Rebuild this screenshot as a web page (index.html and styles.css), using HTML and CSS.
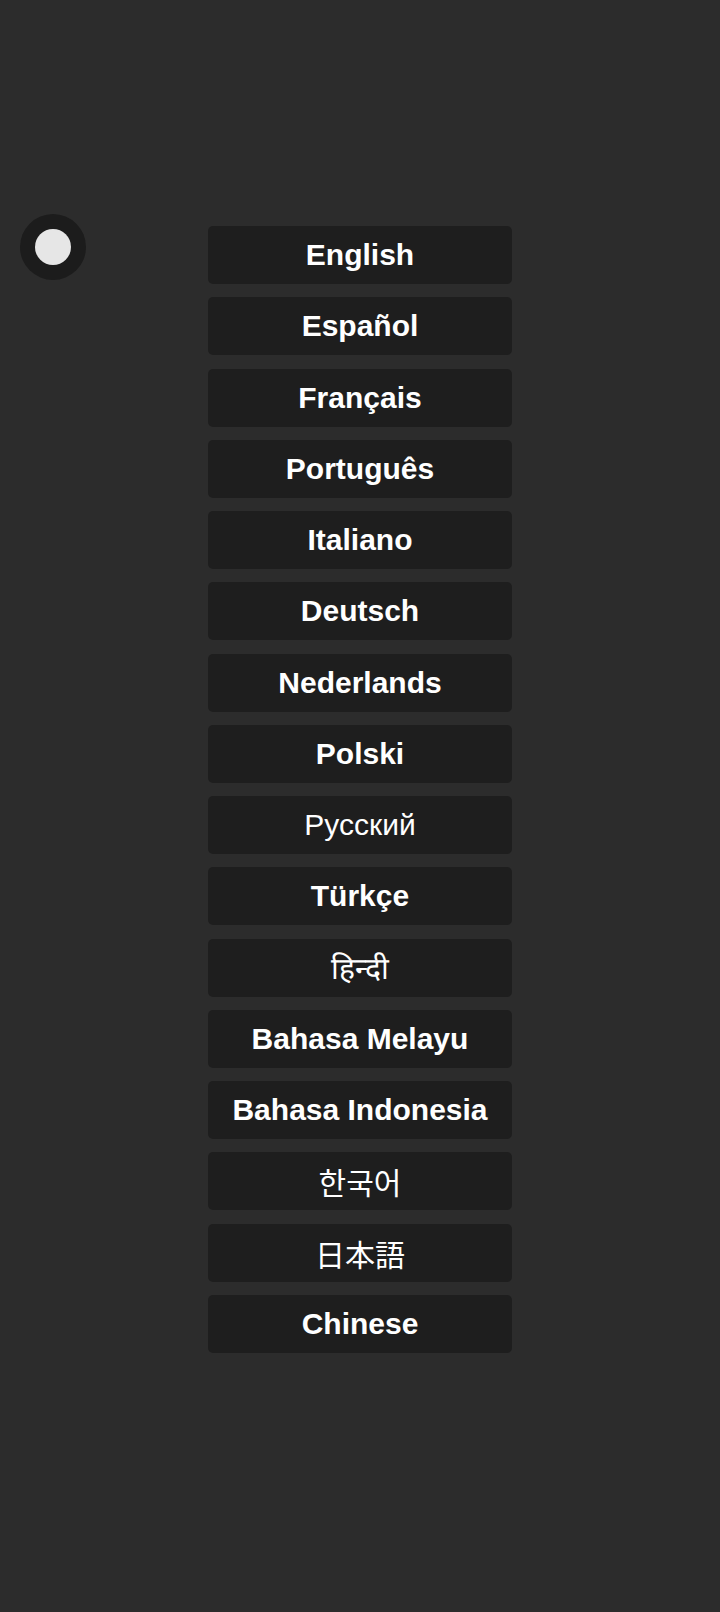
FILE: index.html
```html
<!DOCTYPE html>
<html lang="en">
<head>
<meta charset="utf-8">
<title>Language</title>
<link rel="stylesheet" href="styles.css">
</head>
<body>
<div class="toggle"><span class="knob"></span></div>
<main class="list">
  <button class="lang">English</button>
  <button class="lang">Español</button>
  <button class="lang">Français</button>
  <button class="lang">Português</button>
  <button class="lang">Italiano</button>
  <button class="lang">Deutsch</button>
  <button class="lang">Nederlands</button>
  <button class="lang">Polski</button>
  <button class="lang lang-regular">Русский</button>
  <button class="lang">Türkçe</button>
  <button class="lang lang-regular">हिन्दी</button>
  <button class="lang">Bahasa Melayu</button>
  <button class="lang">Bahasa Indonesia</button>
  <button class="lang lang-regular lang-cjk" lang="ko">한국어</button>
  <button class="lang lang-regular lang-cjk" lang="ja">日本語</button>
  <button class="lang">Chinese</button>
</main>
</body>
</html>
```
FILE: styles.css
```css
html, body {
  margin: 0;
  padding: 0;
}
body {
  background: #2c2c2c;
  min-height: 1612px;
  font-family: "Liberation Sans", Arial, sans-serif;
  position: relative;
}
.toggle {
  position: absolute;
  left: 20px;
  top: 214px;
  width: 66px;
  height: 66px;
  border-radius: 50%;
  background: #1c1c1c;
  display: flex;
  align-items: center;
  justify-content: center;
}
.knob {
  width: 36px;
  height: 36px;
  border-radius: 50%;
  background: #e6e6e6;
}
.list {
  padding-top: 226px;
  display: flex;
  flex-direction: column;
  align-items: center;
  gap: 13.27px;
}
.lang {
  width: 304px;
  height: 58px;
  border: none;
  border-radius: 5px;
  background: #1e1e1e;
  color: #ffffff;
  font-family: "Liberation Sans", Arial, sans-serif;
  font-weight: bold;
  font-size: 30px;
  padding: 0;
  display: flex;
  align-items: center;
  justify-content: center;
}
.lang-regular {
  font-weight: normal;
}
.lang-cjk {
  font-family: "Noto Sans CJK KR", "Noto Sans CJK JP", sans-serif;
}
```
